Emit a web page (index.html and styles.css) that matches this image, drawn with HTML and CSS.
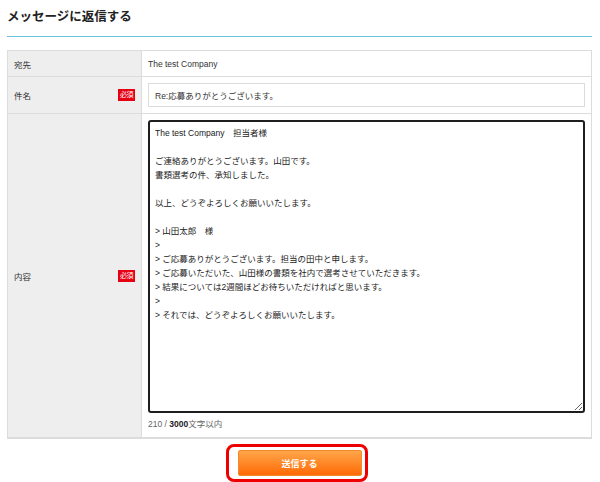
FILE: index.html
```html
<!DOCTYPE html>
<html lang="ja">
<head>
<meta charset="utf-8">
<title>メッセージに返信する</title>
<link rel="stylesheet" href="styles.css">
</head>
<body>
<div class="page">
  <h1 class="title">メッセージに返信する</h1>
  <div class="form">
    <div class="label">宛先</div>
    <div class="value value-text">The test Company</div>

    <div class="label"><span>件名</span><span class="req">必須</span></div>
    <div class="value"><input class="subject" type="text" value="Re:応募ありがとうございます。"></div>

    <div class="label"><span>内容</span><span class="req">必須</span></div>
    <div class="value value-body">
      <textarea class="body">The test Company　担当者様

ご連絡ありがとうございます。山田です。
書類選考の件、承知しました。

以上、どうぞよろしくお願いいたします。

> 山田太郎　様
>
> ご応募ありがとうございます。担当の田中と申します。
> ご応募いただいた、山田様の書類を社内で選考させていただきます。
> 結果については2週間ほどお待ちいただければと思います。
>
> それでは、どうぞよろしくお願いいたします。</textarea>
      <div class="count"><span class="cur">210</span> / <b>3000</b>文字以内</div>
    </div>
  </div>
  <div class="actions">
    <div class="highlight"><button class="send" type="button">送信する</button></div>
  </div>
</div>
</body>
</html>
```

FILE: styles.css
```css
* { box-sizing: border-box; }
html, body { margin: 0; padding: 0; background: #fff; }
body {
  font-family: "Liberation Sans", "Noto Sans CJK JP", sans-serif;
  color: #333;
  font-size: 8.5px;
}
.page { padding: 0 8px 0 7px; }
.title {
  margin: 0;
  font-size: 12.5px;
  font-weight: bold;
  line-height: 18px;
  padding: 8px 0 10px;
  border-bottom: 1px solid #6cc3e0;
  color: #222;
}
.form {
  margin-top: 13px;
  display: grid;
  grid-template-columns: 134px 1fr;
  border: 1px solid #dcdcdc;
  border-bottom-width: 2px;
}
.label {
  background: #eeeeee;
  border-right: 1px solid #dcdcdc;
  border-bottom: 1px solid #dcdcdc;
  padding: 0 6px;
  display: flex;
  align-items: center;
  justify-content: space-between;
}
.value {
  border-bottom: 1px solid #dcdcdc;
  padding: 6px 6px;
}
.form > .label:nth-last-child(2),
.form > .value:last-child { border-bottom: none; }
.value-text { height: 26px; display: flex; align-items: center; padding-top: 0; padding-bottom: 0; }
.req {
  background: #e60012;
  color: #fff;
  font-size: 7px;
  line-height: 12px;
  padding: 0 2px;
  white-space: nowrap;
  letter-spacing: -0.5px;
}
.subject {
  display: block;
  width: 100%;
  height: 24px;
  border: 1px solid #dcdcdc;
  padding: 0 6px;
  font: inherit;
  color: #333;
  outline: none;
  background: #fff;
}
.value-body { padding-top: 6px; padding-bottom: 6px; }
.body {
  display: block;
  width: 100%;
  height: 293px;
  border: 2px solid #1e1e1e;
  border-radius: 3px;
  padding: 4px 5px;
  font: inherit;
  line-height: 14px;
  color: #222;
  outline: none;
  resize: vertical;
  background: #fff;
  overflow: hidden;
}
.count {
  margin-top: 4px;
  line-height: 14px;
  color: #666;
}
.count b { color: #222; }
.actions {
  display: flex;
  justify-content: center;
  padding-top: 5px;
}
.highlight {
  border: 3px solid #ee0000;
  border-radius: 8px;
  padding: 3px 3px 3px 9px;
  margin-right: 6px;
}
.send {
  display: block;
  width: 124px;
  height: 26px;
  border: 1px solid #f08a2a;
  border-radius: 2px;
  background: linear-gradient(#ffa64a, #ff6a05);
  color: #fff;
  font-family: "Liberation Sans", "Noto Sans CJK JP", sans-serif;
  font-weight: bold;
  font-size: 9px;
  padding: 0;
}
```
